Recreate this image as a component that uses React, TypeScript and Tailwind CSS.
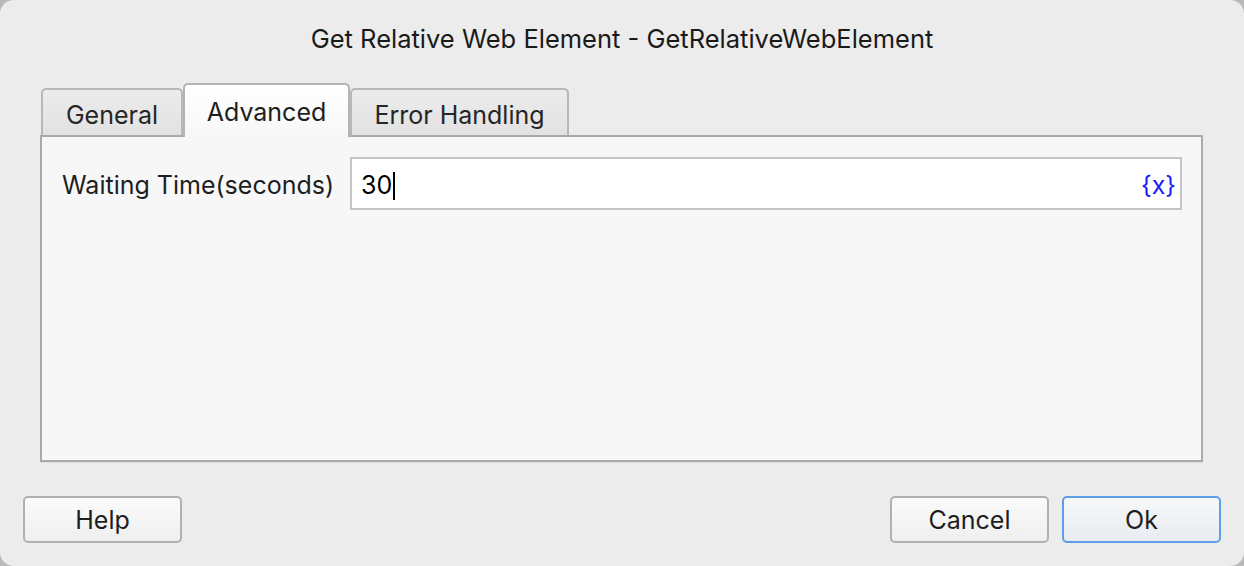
import React from 'react';

const FONT = "font-['Inter','Liberation_Sans',Arial,sans-serif]";

const Tab: React.FC<{ label: string; active?: boolean; width: string }> = ({ label, active, width }) => {
  if (active) {
    return (
      <div
        className={`${width} h-[54px] -mb-[2px] relative z-10 flex items-start justify-center pt-[9px] rounded-t-[5px] border-2 border-b-0 border-[#b4b4b4] bg-gradient-to-b from-white to-[#f7f7f7] text-[25px] text-[#1e1e1e]`}
      >
        {label}
      </div>
    );
  }
  return (
    <div
      className={`${width} h-[47px] flex items-start justify-center pt-[7px] rounded-t-[5px] border-2 border-b-0 border-[#b8b8b8] bg-gradient-to-b from-[#ececec] to-[#e2e2e2] text-[25px] text-[#262626]`}
    >
      {label}
    </div>
  );
};

const Button: React.FC<{ label: string; primary?: boolean }> = ({ label, primary }) => (
  <button
    className={`w-[159px] h-[47px] pt-[3px] rounded-[5px] border-2 text-[25px] text-[#1e1e1e] flex items-center justify-center ${
      primary
        ? 'border-[#5e9de8] bg-gradient-to-b from-[#f7f8fa] to-[#e8ebf0]'
        : 'border-[#b0b0b0] bg-gradient-to-b from-[#fbfbfb] to-[#efefef]'
    }`}
  >
    {label}
  </button>
);

export default function App() {
  return (
    <div className={`w-[1244px] h-[566px] bg-[#b9b9b9] ${FONT}`}>
      <div className="w-full h-full rounded-[14px] bg-[#ececec] flex flex-col">
        <div className="h-[80px] flex items-center justify-center pb-[2px] text-[25.5px] text-[#1a1a1a]">
          Get Relative Web Element - GetRelativeWebElement
        </div>

        <div className="px-[40px] flex flex-col">
          <div className="flex items-end pl-[1px] h-[55px]">
            <Tab label="General" width="w-[142px]" />
            <Tab label="Advanced" active width="w-[167px]" />
            <Tab label="Error Handling" width="w-[219px]" />
          </div>
          <div className="w-[1163px] h-[327px] border-2 border-[#aaaaaa] bg-[#f7f7f7] shadow-[0_1px_0_#dcdcdc] flex flex-col">
            <div className="flex items-center pt-[20px] pl-[20px] pr-[19px]">
              <span className="w-[288px] pt-[5px] text-[25px] text-[#1e1e1e]">Waiting Time(seconds)</span>
              <div className="flex-1 h-[53px] pt-[4px] bg-white border-2 border-[#c4c4c4] flex items-center pl-[9px] pr-[4px]">
                <span className="text-[25px] text-black">30</span>
                <span className="w-[2px] h-[28px] bg-black ml-[1px]" />
                <span className="ml-auto text-[25px] text-[#1a1aff]">{'{x}'}</span>
              </div>
            </div>
          </div>
        </div>

        <div className="flex items-center px-[23px] pt-[34px]">
          <Button label="Help" />
          <div className="ml-auto flex gap-[13px]">
            <Button label="Cancel" />
            <Button label="Ok" primary />
          </div>
        </div>
      </div>
    </div>
  );
}
